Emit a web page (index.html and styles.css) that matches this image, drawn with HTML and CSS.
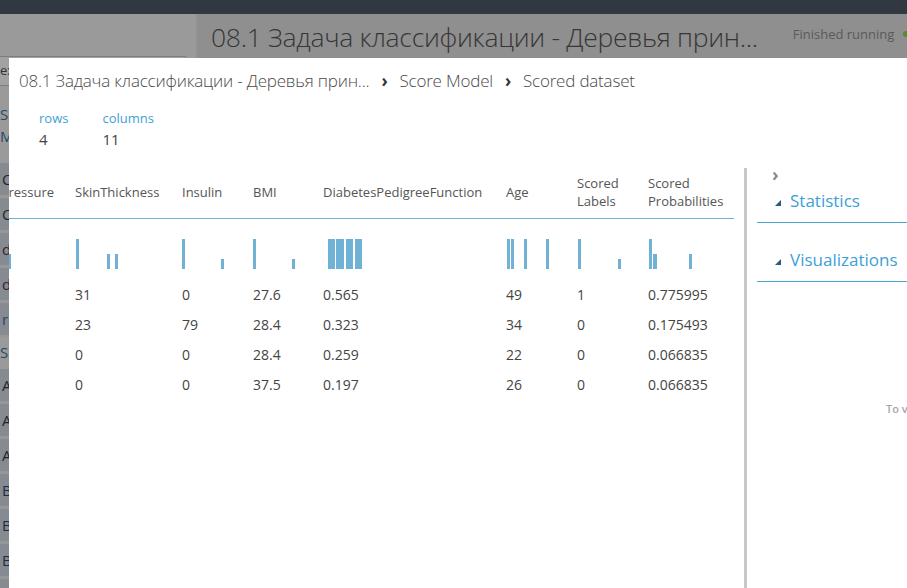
FILE: index.html
```html
<!DOCTYPE html>
<html lang="ru">
<head>
<meta charset="utf-8">
<title>Scored dataset</title>
<link rel="stylesheet" href="styles.css">
</head>
<body>
<div class="app">
  <div class="topbar"></div>
  <div class="workspace">
    <aside class="palette">
      <div class="search">experiment items</div>
      <div class="group">Saved Datasets</div>
      <div class="group">My Datasets</div>
      <div class="item">CDC diabetes</div>
      <div class="item">Copy of diabetes</div>
      <div class="item item-d">diabetes.csv</div>
      <div class="item item-d">diabetes_train</div>
      <div class="item item-r">regression set</div>
      <div class="group group-row">Samples</div>
      <div class="item">Adult Census Income</div>
      <div class="item">Airport Codes Dataset</div>
      <div class="item">Automobile price data</div>
      <div class="item item-b">Bike Rental UCI dataset</div>
      <div class="item item-b">Bill Gates RGB Image</div>
      <div class="item item-b">Blood donation data</div>
      <div class="item item-b">Breast cancer data</div>
    </aside>
    <main class="canvas">
      <h1 class="exp-title">08.1 Задача классификации - Деревья прин...</h1>
      <div class="status">Finished running <span class="dot"></span></div>
    </main>
  </div>

  <section class="modal">
    <nav class="crumbs">
      <span>08.1 Задача классификации - Деревья прин...</span>
      <span class="sep">›</span>
      <span>Score Model</span>
      <span class="sep">›</span>
      <span>Scored dataset</span>
    </nav>
    <div class="stats">
      <div class="stat"><div class="stat-label">rows</div><div class="stat-value">4</div></div>
      <div class="stat"><div class="stat-label">columns</div><div class="stat-value">11</div></div>
    </div>
    <div class="body">
      <div class="table-wrap">
        <div class="table">
          <div class="row head">
            <div class="c c-bp">BloodPressure</div>
            <div class="c c-st">SkinThickness</div>
            <div class="c c-in">Insulin</div>
            <div class="c c-bmi">BMI</div>
            <div class="c c-dpf">DiabetesPedigreeFunction</div>
            <div class="c c-age">Age</div>
            <div class="c c-sl">Scored<br>Labels</div>
            <div class="c c-sp">Scored<br>Probabilities</div>
          </div>
          <div class="row hist">
            <div class="c c-bp"><i class="bar" style="margin-left:43px;height:15px"></i></div>
            <div class="c c-st"><i class="bar" style="margin-left:1px;height:30px"></i><i class="bar" style="margin-left:28px;height:15px"></i><i class="bar" style="margin-left:5px;height:15px"></i></div>
            <div class="c c-in"><i class="bar" style="margin-left:0;height:30px"></i><i class="bar" style="margin-left:36px;height:10px"></i></div>
            <div class="c c-bmi"><i class="bar" style="margin-left:0;height:30px"></i><i class="bar" style="margin-left:36px;height:10px"></i></div>
            <div class="c c-dpf"><i class="bar" style="margin-left:5px;width:7px;height:30px"></i><i class="bar" style="margin-left:1px;width:8px;height:30px"></i><i class="bar" style="margin-left:2px;width:7px;height:30px"></i><i class="bar" style="margin-left:2px;width:7px;height:30px"></i></div>
            <div class="c c-age"><i class="bar" style="margin-left:1px;height:30px"></i><i class="bar" style="margin-left:1px;height:30px"></i><i class="bar" style="margin-left:10px;height:30px"></i><i class="bar" style="margin-left:19px;height:30px"></i></div>
            <div class="c c-sl"><i class="bar" style="margin-left:1px;height:30px"></i><i class="bar" style="margin-left:37px;height:10px"></i></div>
            <div class="c c-sp"><i class="bar" style="margin-left:1px;height:30px"></i><i class="bar" style="margin-left:1px;width:4px;height:15px"></i><i class="bar" style="margin-left:32px;height:15px"></i></div>
          </div>
          <div class="row data">
            <div class="c c-bp">66</div><div class="c c-st">31</div><div class="c c-in">0</div><div class="c c-bmi">27.6</div><div class="c c-dpf">0.565</div><div class="c c-age">49</div><div class="c c-sl">1</div><div class="c c-sp">0.775995</div>
          </div>
          <div class="row data">
            <div class="c c-bp">72</div><div class="c c-st">23</div><div class="c c-in">79</div><div class="c c-bmi">28.4</div><div class="c c-dpf">0.323</div><div class="c c-age">34</div><div class="c c-sl">0</div><div class="c c-sp">0.175493</div>
          </div>
          <div class="row data">
            <div class="c c-bp">76</div><div class="c c-st">0</div><div class="c c-in">0</div><div class="c c-bmi">28.4</div><div class="c c-dpf">0.259</div><div class="c c-age">22</div><div class="c c-sl">0</div><div class="c c-sp">0.066835</div>
          </div>
          <div class="row data">
            <div class="c c-bp">58</div><div class="c c-st">0</div><div class="c c-in">0</div><div class="c c-bmi">37.5</div><div class="c c-dpf">0.197</div><div class="c c-age">26</div><div class="c c-sl">0</div><div class="c c-sp">0.066835</div>
          </div>
        </div>
      </div>
      <div class="divider"></div>
      <aside class="side">
        <div class="collapse">›</div>
        <div class="section sec-stats"><span class="tri"></span>Statistics</div>
        <div class="section sec-vis"><span class="tri"></span>Visualizations</div>
        <p class="hint">To view a visualization, select a column</p>
      </aside>
    </div>
  </section>
</div>
</body>
</html>
```
FILE: styles.css
```css
* { box-sizing: border-box; }
html, body { margin: 0; padding: 0; }
body {
  width: 907px;
  height: 588px;
  overflow: hidden;
  font-family: "Open Sans", "Noto Sans", sans-serif;
  background: #8f8f8f;
}
.app {
  position: relative;
  width: 907px;
  height: 588px;
  overflow: hidden;
  display: flex;
  flex-direction: column;
}
.topbar {
  height: 14px;
  background: #323842;
  flex: none;
}
.workspace {
  flex: 1;
  display: flex;
}
.palette {
  width: 197px;
  background: #9a9a9a;
  border-right: 1px solid #939393;
  padding-top: 42px;
  display: flex;
  flex-direction: column;
  font-size: 14px;
  color: #1d2a35;
  overflow: hidden;
  white-space: nowrap;
}
.search {
  width: 186px;
  height: 30px;
  border: 1px solid #7d7d7d;
  border-left: 0;
  background: #a2a2a2;
  padding: 4px 0 0 0;
  font-size: 13px;
  color: #333;
}
.group {
  height: 22px;
  line-height: 22px;
  padding-left: 0;
  color: #254a6a;
  font-size: 15px;
}
.search + .group { margin-top: 17px; }
.item {
  height: 35px;
  line-height: 32px;
  padding-left: 2px;
  background: #858b90;
  border-bottom: 3px solid #979797;
  color: #1f252b;
  font-size: 15px;
}
.palette .group + .item { margin-top: 16px; }
.item-d { color: #3a1d35; }
.item-r { color: #1f4a6e; }
.item-b { color: #1c2a44; }
.group-row {
  height: 32px;
  line-height: 30px;
  margin-top: -1px;
  background: #9a9a9a;
  border-bottom: 3px solid #9a9a9a;
  color: #1f4a6e;
}
.palette .group-row + .item { margin-top: 0; }
.canvas {
  flex: 1;
  display: flex;
  align-items: flex-start;
  padding: 6px 0 0 14px;
  white-space: nowrap;
  overflow: hidden;
}
.exp-title {
  margin: 0;
  font-size: 26.5px;
  line-height: 34px;
  font-weight: 300;
  color: #363636;
  letter-spacing: -0.3px;
}
.status {
  margin-left: 35px;
  margin-top: 5px;
  font-size: 13px;
  color: #5a5a5a;
  display: flex;
  align-items: center;
  gap: 9px;
}
.dot {
  width: 6px; height: 6px; border-radius: 50%;
  background: #4f8f2c;
  display: inline-block;
}

/* modal */
.modal {
  position: absolute;
  left: 9px;
  top: 58px;
  right: 0;
  bottom: 0;
  background: #fff;
  display: flex;
  flex-direction: column;
}
.crumbs {
  padding: 11px 0 0 10px;
  height: 35px;
  line-height: 24px;
  font-size: 17px;
  font-weight: 300;
  color: #4a4a4a;
  white-space: nowrap;
  display: flex;
  gap: 9px;
  letter-spacing: -0.2px;
}
.crumbs .sep {
  font-weight: 700;
  color: #333;
  margin: 0 3px;
}
.stats {
  display: flex;
  gap: 34px;
  padding: 16px 0 0 30px;
}
.stat-label {
  font-size: 13px;
  line-height: 18px;
  color: #3f9fd4;
}
.stat-value {
  margin-top: 1px;
  font-size: 15px;
  line-height: 22px;
  color: #444;
}
.body {
  flex: 1;
  display: flex;
  margin-top: 18px;
  min-height: 0;
}
.table-wrap {
  width: 725px;
  overflow: hidden;
  flex: none;
}
.table {
  margin-left: -44px;
  width: 830px;
}
.row { display: flex; }
.c { flex: none; white-space: nowrap; }
.c-bp { width: 110px; }
.c-st { width: 107px; }
.c-in { width: 71px; }
.c-bmi { width: 70px; }
.c-dpf { width: 183px; }
.c-age { width: 71px; }
.c-sl { width: 71px; }
.c-sp { width: 120px; }
.head {
  height: 51px;
  align-items: center;
  border-bottom: 1px solid #6db3dc;
  font-size: 13px;
  line-height: 18px;
  color: #555;
  padding-bottom: 2px;
}
.head .c-bp { text-align: right; padding-right: 21px; }
.hist {
  height: 61px;
  padding: 20px 0 11px;
}
.hist .c {
  display: flex;
  align-items: flex-end;
  height: 30px;
}
.bar {
  display: block;
  width: 3px;
  background: #70b2d6;
  flex: none;
}
.data {
  height: 30px;
  line-height: 30px;
  font-size: 14px;
  color: #444;
}
.divider {
  width: 3px;
  margin-left: 10px;
  background: #c8c8c8;
  flex: none;
}
.side {
  flex: 1;
  padding-left: 10px;
  overflow: hidden;
  white-space: nowrap;
}
.collapse {
  height: 15px;
  line-height: 12px;
  margin-left: 15px;
  font-size: 18px;
  font-weight: 700;
  color: #8a8a8a;
}
.section {
  display: flex;
  align-items: center;
  font-size: 17px;
  line-height: 24px;
  color: #3c9fd6;
  border-bottom: 1px solid #4aa5d4;
  padding-left: 18px;
  padding-bottom: 9px;
}
.sec-stats { padding-top: 6px; }
.sec-vis { padding-top: 25px; }
.tri {
  width: 0; height: 0;
  border-left: 6px solid transparent;
  border-bottom: 6px solid #2a5c7e;
  margin-right: 9px;
  margin-top: 4px;
}
.hint {
  margin: 119px 0 0 129px;
  font-size: 11px;
  font-weight: 600;
  color: #a6a6a6;
}
```
